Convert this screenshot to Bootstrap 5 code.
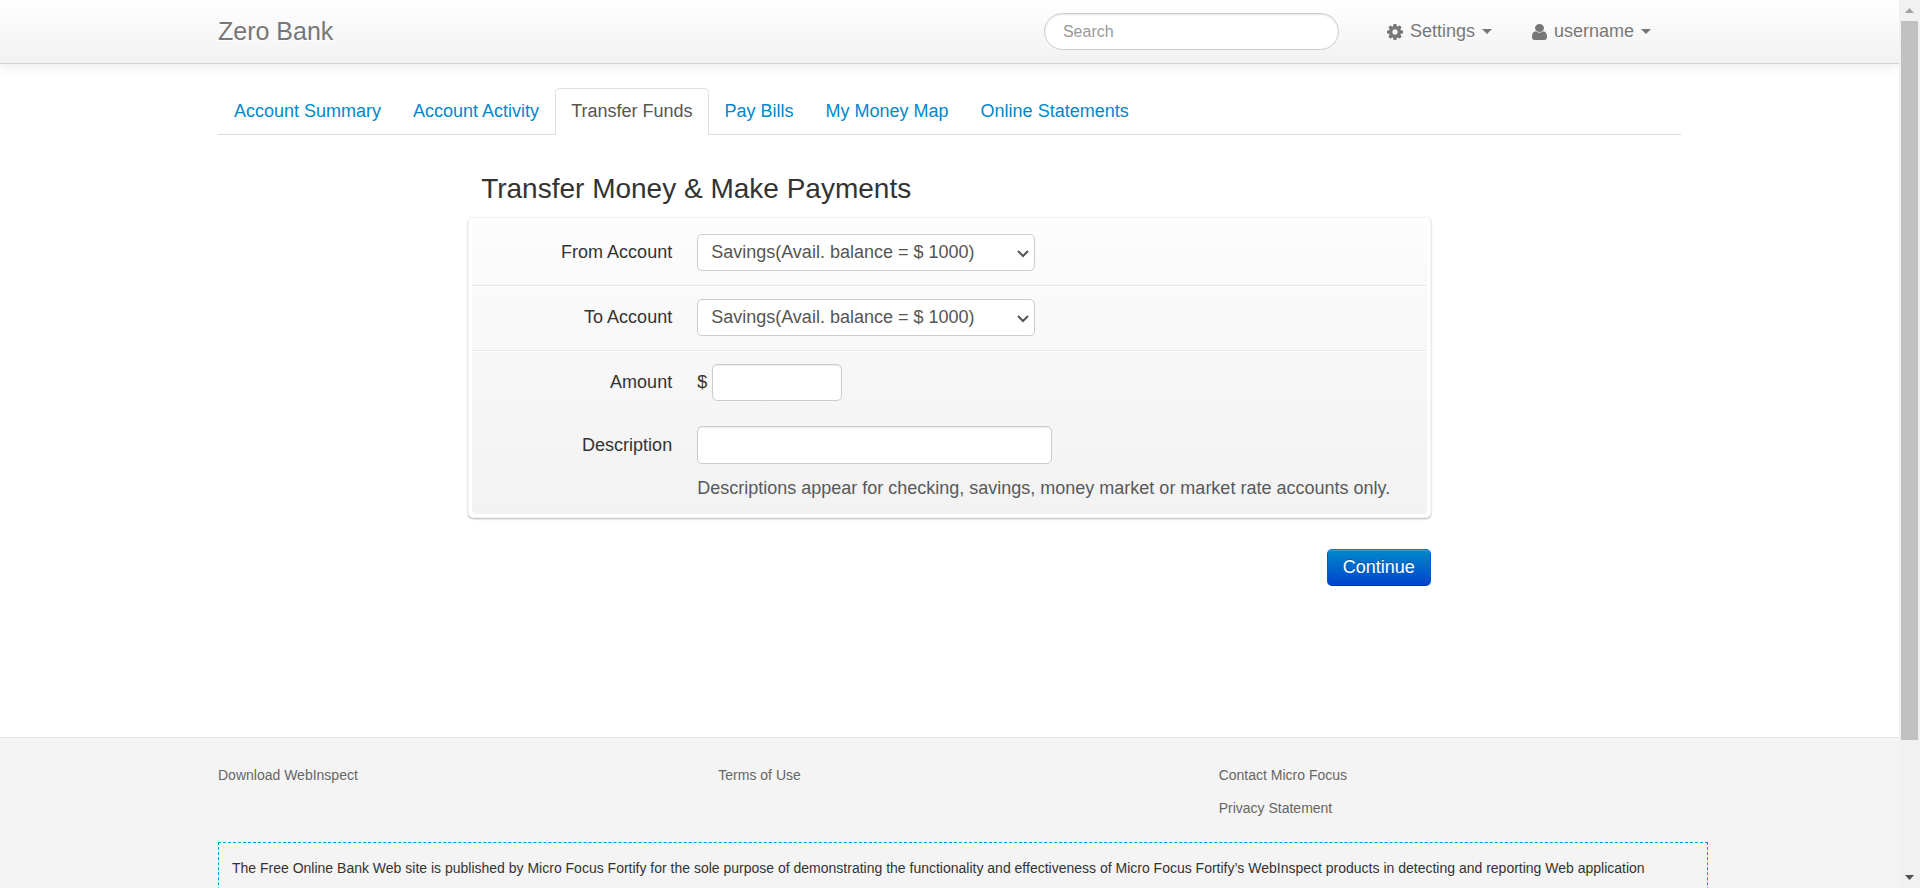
<!DOCTYPE html>
<html lang="en">
<head>
<meta charset="utf-8">
<meta name="viewport" content="width=device-width, initial-scale=1">
<title>Zero - Transfer Funds</title>
<link rel="stylesheet" href="https://cdn.jsdelivr.net/npm/bootstrap@5.3.0/dist/css/bootstrap.min.css">
<style>
  body { font-family: "Liberation Sans", Arial, sans-serif; font-size: 18px; line-height: 25px; color: #333; background: #fff; }
  a { color: #0088cc; text-decoration: none; }
  .page-width { --bs-gutter-x: 38px; max-width: 1501px; }
  .row { --bs-gutter-x: 38px; }

  .topbar { height: 64px; background: linear-gradient(#fff, #f2f2f2); border-bottom: 1px solid #d4d4d4; box-shadow: 0 1px 13px rgba(0,0,0,.1); }
  .brand-link { font-size: 25px; color: #777; text-shadow: 0 1px 0 #fff; }
  .search-box { width: 295px; height: 37px; margin-right: 48px; padding: 5px 18px; font-size: 16px; border: 1px solid #ccc; border-radius: 19px; box-shadow: inset 0 1px 2px rgba(0,0,0,.1); }
  .search-box::placeholder { color: #999; }
  .top-menu { margin-right: 30px; }
  .top-menu .nav-link { color: #777; padding: 0; text-shadow: 0 1px 0 #fff; }
  .top-menu svg { fill: currentColor; margin-right: 7px; }
  .menu-arrow { width: 0; height: 0; border: 5px solid transparent; border-top-color: #777; border-bottom: 0; margin-left: 7px; }

  .nav-tabs { --bs-nav-tabs-border-color: #ddd; --bs-nav-tabs-border-radius: 5px; margin-top: 24px; }
  .nav-tabs .nav-link { padding: 10px 15px; color: #0088cc; }
  .nav-tabs .nav-link.active { color: #555; border-color: #ddd #ddd #fff; }

  .page-title { font-size: 28px; line-height: 50px; margin: 29px 0 3px 13px; }
  .board { padding: 3px; border-radius: 5px; background: #fff; border: 1px solid #f4f4f4; box-shadow: 0 1px 2px rgba(0,0,0,.3); }
  .board-content { padding-bottom: 13px; border-radius: 4px; background: linear-gradient(#fcfcfc, #f2f2f2); }
  .form-line { padding: 13px 0 12px; }
  .form-line.divided { padding-bottom: 14px; border-bottom: 1px solid #e8e8e8; box-shadow: 0 1px 0 #fff; }
  .line-label { width: 200px; text-align: right; margin-right: 25px; flex: none; }
  .form-select, .form-control { height: 37px; color: #555; font-size: 18px; line-height: 25px; border: 1px solid #ccc; border-radius: 5px; }
  .form-control { box-shadow: inset 0 1px 1px rgba(0,0,0,.08); }
  .form-select { width: 338px; padding: 5px 24px 5px 13px; background-position: right 4px center; background-size: 14px 14px;
    background-image: url("data:image/svg+xml,%3csvg xmlns='http://www.w3.org/2000/svg' viewBox='0 0 14 14'%3e%3cpath fill='none' stroke='%23555' stroke-width='2' d='m2 5 5 5 5-5'/%3e%3c/svg%3e"); }
  .amount-sign { margin-right: 5px; }
  .amount-box { width: 130px; }
  .description-box { width: 355px; height: 38px; }
  .help-note { color: #595959; }
  .form-actions { margin-top: 31px; }
  .btn-continue { height: 37px; padding: 5px 15px; font-size: 18px; line-height: 25px; color: #fff; border: 1px solid; border-color: #0074cc #0055cc #003ba8; border-radius: 5px; background: linear-gradient(#0088cc, #0044cc); box-shadow: inset 0 1px 0 rgba(255,255,255,.2); text-shadow: 0 -1px 0 rgba(0,0,0,.25); }
  .btn-continue:hover { color: #fff; background: #0044cc; }

  .site-footer { margin-top: 151px; padding-top: 25px; background: #f4f4f4; border-top: 1px solid #e5e5e5; font-size: 14px; }
  .site-footer a { color: #666; }
  .disclaimer { margin-top: 21px; margin-right: -27px; padding: 13px 13px 180px; border: 1px dashed #0099dd; }

  .scroll-strip { width: 21px; background: #f1f1f1; }
  .strip-end { height: 21px; }
  .strip-thumb { height: 81%; margin: 0 2px; background: #c1c1c1; }
</style>
<script src="https://cdn.jsdelivr.net/npm/bootstrap@5.3.0/dist/js/bootstrap.bundle.min.js"></script>
</head>
<body class="vh-100 d-flex overflow-hidden">
<div class="flex-grow-1 overflow-hidden">
  <header class="topbar">
    <div class="container-fluid page-width h-100 d-flex align-items-center">
      <a class="brand-link me-auto" href="#">Zero Bank</a>
      <input class="search-box" type="search" placeholder="Search" aria-label="Search">
      <ul class="top-menu nav align-items-center">
        <li class="nav-item"><a class="nav-link d-flex align-items-center" href="#">
          <svg width="16" height="16" viewBox="0 128 1536 1536" aria-hidden="true"><path d="M1024 896q0-106-75-181t-181-75-181 75-75 181 75 181 181 75 181-75 75-181zm512-109v222q0 12-8 23t-20 13l-185 28q-19 54-39 91 35 50 107 138 10 12 10 25t-9 23q-27 37-99 108t-94 71q-12 0-26-9l-138-108q-44 23-91 38-16 136-29 186-7 28-36 28h-222q-14 0-24.500-8.500t-11.500-21.500l-28-184q-49-16-90-37l-141 107q-10 9-25 9-14 0-25-11-126-114-165-168-7-10-7-23 0-12 8-23 15-21 51-66.500t54-70.500q-27-50-41-99l-183-27q-13-2-21-12.500t-8-23.500v-222q0-12 8-23t19-13l186-28q14-46 39-92-40-57-107-138-10-12-10-24 0-10 9-23 26-36 98.500-107.500t94.500-71.500q13 0 26 10l138 107q44-23 91-38 16-136 29-186 7-28 36-28h222q14 0 24.500 8.500t11.500 21.500l28 184q49 16 90 37l142-107q9-9 24-9 13 0 25 10 129 119 165 170 7 8 7 22 0 12-8 23-15 21-51 66.500t-54 70.500q26 50 41 98l183 28q13 2 21 12.500t8 23.500z"/></svg>
          Settings<span class="menu-arrow"></span></a></li>
        <li class="nav-item ms-4 ps-3"><a class="nav-link d-flex align-items-center" href="#">
          <svg width="15" height="16" viewBox="0 128 1280 1536" preserveAspectRatio="none" aria-hidden="true"><path d="M1280 1399q0 109-62.500 187t-150.500 78h-854q-88 0-150.500-78t-62.500-187q0-85 8.500-160.500t31.500-152 58.500-131 94-89 134.500-34.500q131 128 313 128t313-128q76 0 134.500 34.500t94 89 58.500 131 31.500 152 8.500 160.500zm-256-887q0 159-112.500 271.500t-271.500 112.500-271.500-112.500-112.500-271.500 112.500-271.500 271.500-112.500 271.500 112.500 112.500 271.500z"/></svg>
          username<span class="menu-arrow"></span></a></li>
      </ul>
    </div>
  </header>

  <main class="container-fluid page-width">
    <ul class="nav nav-tabs">
      <li class="nav-item"><a class="nav-link" href="#">Account Summary</a></li>
      <li class="nav-item"><a class="nav-link" href="#">Account Activity</a></li>
      <li class="nav-item"><a class="nav-link active" aria-current="page" href="#">Transfer Funds</a></li>
      <li class="nav-item"><a class="nav-link" href="#">Pay Bills</a></li>
      <li class="nav-item"><a class="nav-link" href="#">My Money Map</a></li>
      <li class="nav-item"><a class="nav-link" href="#">Online Statements</a></li>
    </ul>
    <div class="row">
      <form class="col-8 offset-2">
        <h2 class="page-title fw-normal">Transfer Money &amp; Make Payments</h2>
        <div class="board">
          <div class="board-content">
            <div class="form-line divided d-flex align-items-center">
              <label class="line-label" for="from-account">From Account</label>
              <select class="form-select" id="from-account"><option>Savings(Avail. balance = $ 1000)</option></select>
            </div>
            <div class="form-line divided d-flex align-items-center">
              <label class="line-label" for="to-account">To Account</label>
              <select class="form-select" id="to-account"><option>Savings(Avail. balance = $ 1000)</option></select>
            </div>
            <div class="form-line d-flex align-items-center">
              <label class="line-label" for="amount">Amount</label>
              <span class="amount-sign">$</span>
              <input class="form-control amount-box" type="text" id="amount">
            </div>
            <div class="form-line d-flex align-items-center">
              <label class="line-label" for="description">Description</label>
              <input class="form-control description-box" type="text" id="description" aria-describedby="description-note">
            </div>
            <div class="d-flex">
              <span class="line-label"></span>
              <span class="help-note" id="description-note">Descriptions appear for checking, savings, money market or market rate accounts only.</span>
            </div>
          </div>
        </div>
        <div class="form-actions text-end">
          <button class="btn btn-continue" type="submit">Continue</button>
        </div>
      </form>
    </div>
  </main>

  <footer class="site-footer">
    <div class="container-fluid page-width">
      <div class="row">
        <div class="col-4"><a href="#">Download WebInspect</a></div>
        <div class="col-4"><a href="#">Terms of Use</a></div>
        <div class="col-4 d-flex flex-column gap-2"><a href="#">Contact Micro Focus</a><a href="#">Privacy Statement</a></div>
      </div>
      <div class="disclaimer">The Free Online Bank Web site is published by Micro Focus Fortify for the sole purpose of demonstrating the functionality and effectiveness of Micro Focus Fortify’s WebInspect products in detecting and reporting Web application</div>
    </div>
  </footer>
</div>
<div class="scroll-strip flex-shrink-0 d-flex flex-column" aria-hidden="true">
  <div class="strip-end d-flex justify-content-center align-items-center"><svg width="9" height="5" viewBox="0 0 9 5"><path fill="#a3a3a3" d="M4.500 0 9 5H0z"/></svg></div>
  <div class="strip-thumb"></div>
  <div class="strip-end mt-auto d-flex justify-content-center align-items-center"><svg width="9" height="5" viewBox="0 0 9 5"><path fill="#505050" d="M4.500 5 9 0H0z"/></svg></div>
</div>
</body>
</html>
